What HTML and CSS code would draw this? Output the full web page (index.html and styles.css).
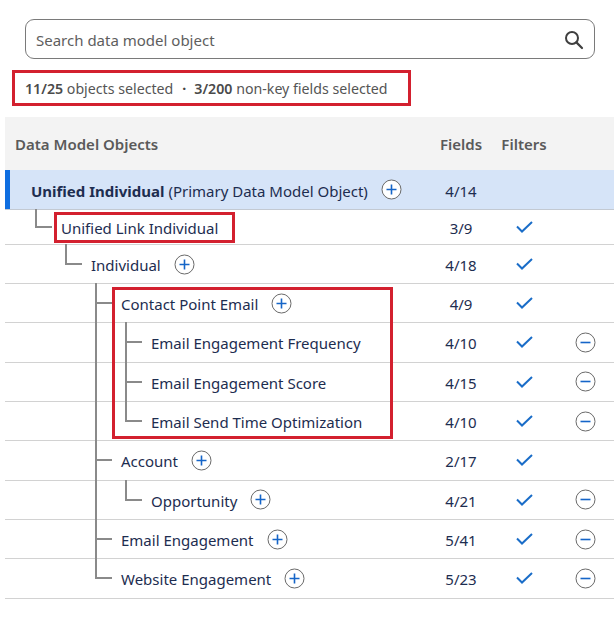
FILE: index.html
```html
<!DOCTYPE html>
<html lang="en">
<head>
<meta charset="utf-8">
<title>Data Model Objects</title>
<link rel="stylesheet" href="styles.css">
</head>
<body>
<div class="page">
  <div class="search">
    <span class="search-text">Search data model object</span>
    <svg class="search-icon" width="20" height="20" viewBox="0 0 20 20"><circle cx="8" cy="8" r="6" fill="none" stroke="#3f3f3f" stroke-width="2"/><path d="M12.4 12.4 L18 18" stroke="#3f3f3f" stroke-width="2.2" stroke-linecap="round"/></svg>
  </div>

  <div class="summary"><b>11/25</b><span> objects selected</span><span class="sep">·</span><b>3/200</b><span> non-key fields selected</span></div>

  <div class="table">
    <div class="row head">
      <div class="c-name">Data Model Objects</div>
      <div class="c-fields">Fields</div>
      <div class="c-filters">Filters</div>
      <div class="c-act"></div>
    </div>

    <div class="row primary">
      <div class="c-name"><span class="label"><b>Unified Individual</b> (Primary Data Model Object)</span><svg class="add" width="21" height="21" viewBox="0 0 21 21"><circle cx="10.5" cy="10.5" r="9.5" fill="#fff" stroke="#6a6a6a" stroke-width="1"/><path d="M5.5 10.5 H15.5 M10.5 5.5 V15.5" stroke="#1565c8" stroke-width="1.6"/></svg></div>
      <div class="c-fields">4/14</div>
      <div class="c-filters"></div>
      <div class="c-act"></div>
    </div>

    <div class="row short">
      <div class="c-name"><span class="g g-elbow"></span><span class="label">Unified Link Individual</span></div>
      <div class="c-fields">3/9</div>
      <div class="c-filters"><svg class="check" width="17" height="12" viewBox="0 0 17 12"><path d="M1 5.5 L6 10.5 L16 1" fill="none" stroke="#1a6dc8" stroke-width="2"/></svg></div>
      <div class="c-act"></div>
    </div>

    <div class="row">
      <div class="c-name"><span class="g"></span><span class="g g-elbow"></span><span class="label">Individual</span><svg class="add" width="21" height="21" viewBox="0 0 21 21"><circle cx="10.5" cy="10.5" r="9.5" fill="#fff" stroke="#6a6a6a" stroke-width="1"/><path d="M5.5 10.5 H15.5 M10.5 5.5 V15.5" stroke="#1565c8" stroke-width="1.6"/></svg></div>
      <div class="c-fields">4/18</div>
      <div class="c-filters"><svg class="check" width="17" height="12" viewBox="0 0 17 12"><path d="M1 5.5 L6 10.5 L16 1" fill="none" stroke="#1a6dc8" stroke-width="2"/></svg></div>
      <div class="c-act"></div>
    </div>

    <div class="row">
      <div class="c-name"><span class="g"></span><span class="g"></span><span class="g g-tee"></span><span class="label">Contact Point Email</span><svg class="add" width="21" height="21" viewBox="0 0 21 21"><circle cx="10.5" cy="10.5" r="9.5" fill="#fff" stroke="#6a6a6a" stroke-width="1"/><path d="M5.5 10.5 H15.5 M10.5 5.5 V15.5" stroke="#1565c8" stroke-width="1.6"/></svg></div>
      <div class="c-fields">4/9</div>
      <div class="c-filters"><svg class="check" width="17" height="12" viewBox="0 0 17 12"><path d="M1 5.5 L6 10.5 L16 1" fill="none" stroke="#1a6dc8" stroke-width="2"/></svg></div>
      <div class="c-act"></div>
    </div>

    <div class="row">
      <div class="c-name"><span class="g"></span><span class="g"></span><span class="g g-pipe"></span><span class="g g-tee"></span><span class="label">Email Engagement Frequency</span></div>
      <div class="c-fields">4/10</div>
      <div class="c-filters"><svg class="check" width="17" height="12" viewBox="0 0 17 12"><path d="M1 5.5 L6 10.5 L16 1" fill="none" stroke="#1a6dc8" stroke-width="2"/></svg></div>
      <div class="c-act"><svg class="remove" width="21" height="21" viewBox="0 0 21 21"><circle cx="10.5" cy="10.5" r="9.5" fill="#fff" stroke="#6a6a6a" stroke-width="1"/><path d="M5.5 10.5 H15.5" stroke="#1565c8" stroke-width="1.6"/></svg></div>
    </div>

    <div class="row">
      <div class="c-name"><span class="g"></span><span class="g"></span><span class="g g-pipe"></span><span class="g g-tee"></span><span class="label">Email Engagement Score</span></div>
      <div class="c-fields">4/15</div>
      <div class="c-filters"><svg class="check" width="17" height="12" viewBox="0 0 17 12"><path d="M1 5.5 L6 10.5 L16 1" fill="none" stroke="#1a6dc8" stroke-width="2"/></svg></div>
      <div class="c-act"><svg class="remove" width="21" height="21" viewBox="0 0 21 21"><circle cx="10.5" cy="10.5" r="9.5" fill="#fff" stroke="#6a6a6a" stroke-width="1"/><path d="M5.5 10.5 H15.5" stroke="#1565c8" stroke-width="1.6"/></svg></div>
    </div>

    <div class="row">
      <div class="c-name"><span class="g"></span><span class="g"></span><span class="g g-pipe"></span><span class="g g-elbow"></span><span class="label">Email Send Time Optimization</span></div>
      <div class="c-fields">4/10</div>
      <div class="c-filters"><svg class="check" width="17" height="12" viewBox="0 0 17 12"><path d="M1 5.5 L6 10.5 L16 1" fill="none" stroke="#1a6dc8" stroke-width="2"/></svg></div>
      <div class="c-act"><svg class="remove" width="21" height="21" viewBox="0 0 21 21"><circle cx="10.5" cy="10.5" r="9.5" fill="#fff" stroke="#6a6a6a" stroke-width="1"/><path d="M5.5 10.5 H15.5" stroke="#1565c8" stroke-width="1.6"/></svg></div>
    </div>

    <div class="row">
      <div class="c-name"><span class="g"></span><span class="g"></span><span class="g g-tee"></span><span class="label">Account</span><svg class="add" width="21" height="21" viewBox="0 0 21 21"><circle cx="10.5" cy="10.5" r="9.5" fill="#fff" stroke="#6a6a6a" stroke-width="1"/><path d="M5.5 10.5 H15.5 M10.5 5.5 V15.5" stroke="#1565c8" stroke-width="1.6"/></svg></div>
      <div class="c-fields">2/17</div>
      <div class="c-filters"><svg class="check" width="17" height="12" viewBox="0 0 17 12"><path d="M1 5.5 L6 10.5 L16 1" fill="none" stroke="#1a6dc8" stroke-width="2"/></svg></div>
      <div class="c-act"></div>
    </div>

    <div class="row">
      <div class="c-name"><span class="g"></span><span class="g"></span><span class="g g-pipe"></span><span class="g g-elbow"></span><span class="label">Opportunity</span><svg class="add" width="21" height="21" viewBox="0 0 21 21"><circle cx="10.5" cy="10.5" r="9.5" fill="#fff" stroke="#6a6a6a" stroke-width="1"/><path d="M5.5 10.5 H15.5 M10.5 5.5 V15.5" stroke="#1565c8" stroke-width="1.6"/></svg></div>
      <div class="c-fields">4/21</div>
      <div class="c-filters"><svg class="check" width="17" height="12" viewBox="0 0 17 12"><path d="M1 5.5 L6 10.5 L16 1" fill="none" stroke="#1a6dc8" stroke-width="2"/></svg></div>
      <div class="c-act"><svg class="remove" width="21" height="21" viewBox="0 0 21 21"><circle cx="10.5" cy="10.5" r="9.5" fill="#fff" stroke="#6a6a6a" stroke-width="1"/><path d="M5.5 10.5 H15.5" stroke="#1565c8" stroke-width="1.6"/></svg></div>
    </div>

    <div class="row">
      <div class="c-name"><span class="g"></span><span class="g"></span><span class="g g-tee"></span><span class="label">Email Engagement</span><svg class="add" width="21" height="21" viewBox="0 0 21 21"><circle cx="10.5" cy="10.5" r="9.5" fill="#fff" stroke="#6a6a6a" stroke-width="1"/><path d="M5.5 10.5 H15.5 M10.5 5.5 V15.5" stroke="#1565c8" stroke-width="1.6"/></svg></div>
      <div class="c-fields">5/41</div>
      <div class="c-filters"><svg class="check" width="17" height="12" viewBox="0 0 17 12"><path d="M1 5.5 L6 10.5 L16 1" fill="none" stroke="#1a6dc8" stroke-width="2"/></svg></div>
      <div class="c-act"><svg class="remove" width="21" height="21" viewBox="0 0 21 21"><circle cx="10.5" cy="10.5" r="9.5" fill="#fff" stroke="#6a6a6a" stroke-width="1"/><path d="M5.5 10.5 H15.5" stroke="#1565c8" stroke-width="1.6"/></svg></div>
    </div>

    <div class="row">
      <div class="c-name"><span class="g"></span><span class="g"></span><span class="g g-elbow"></span><span class="label">Website Engagement</span><svg class="add" width="21" height="21" viewBox="0 0 21 21"><circle cx="10.5" cy="10.5" r="9.5" fill="#fff" stroke="#6a6a6a" stroke-width="1"/><path d="M5.5 10.5 H15.5 M10.5 5.5 V15.5" stroke="#1565c8" stroke-width="1.6"/></svg></div>
      <div class="c-fields">5/23</div>
      <div class="c-filters"><svg class="check" width="17" height="12" viewBox="0 0 17 12"><path d="M1 5.5 L6 10.5 L16 1" fill="none" stroke="#1a6dc8" stroke-width="2"/></svg></div>
      <div class="c-act"><svg class="remove" width="21" height="21" viewBox="0 0 21 21"><circle cx="10.5" cy="10.5" r="9.5" fill="#fff" stroke="#6a6a6a" stroke-width="1"/><path d="M5.5 10.5 H15.5" stroke="#1565c8" stroke-width="1.6"/></svg></div>
    </div>

    <div class="annot annot-link"></div>
    <div class="annot annot-email"></div>
  </div>
</div>
</body>
</html>
```

FILE: styles.css
```css
* { box-sizing: border-box; }

html, body {
  margin: 0;
  padding: 0;
  background: #ffffff;
}

body {
  font-family: "Noto Sans", "Open Sans", sans-serif;
  font-size: 15px;
  color: #1d2d50;
}

.page {
  width: 614px;
  padding-top: 19px;
}

.search {
  margin-left: 25px;
  width: 570px;
  height: 40px;
  border: 1px solid #7a7a7a;
  border-radius: 9px;
  display: flex;
  align-items: center;
  justify-content: space-between;
  padding: 1px 10px 0 10px;
}

.search-text {
  color: #5e5e5e;
  font-size: 15px;
}

.search-icon {
  display: block;
}

.summary {
  margin-top: 11px;
  margin-left: 12px;
  width: 399px;
  height: 36px;
  border: 3px solid #d3202f;
  padding: 1px 0 0 10px;
  display: flex;
  align-items: center;
  white-space: pre;
  font-size: 14.2px;
  color: #555555;
}

.summary b {
  font-weight: 600;
  color: #4a4a4a;
}

.summary .sep {
  font-weight: 700;
  color: #444444;
  margin: 0 8px 0 9px;
}

.table {
  position: relative;
  margin-top: 11px;
  margin-left: 5px;
  width: 609px;
}

.row {
  display: grid;
  grid-template-columns: 1fr 62px 64px 58px;
  align-items: center;
  height: 39.33px;
  border-bottom: 1px solid #d2d2d2;
}

.row.head {
  height: 53px;
  background: #f3f3f3;
  border-bottom: none;
  color: #5a5a5a;
  font-weight: 600;
}

.row.head .c-name {
  padding-left: 10px;
}

.row.primary {
  height: 40px;
  background: #d6e4f8;
  box-shadow: inset 5px 0 0 #0f6ee0;
  border-bottom-color: #c3c9d2;
}

.row.primary b {
  font-weight: 700;
}

.row.short {
  height: 35px;
}

.row.primary + .row.short + .row {
  height: 39px;
}

.c-name {
  align-self: stretch;
  display: flex;
  align-items: center;
  padding-left: 26px;
  white-space: nowrap;
}

.row.head .c-name {
  align-self: center;
}

.label {
  padding-top: 2px;
}

.c-fields {
  text-align: center;
  padding-top: 2px;
}

.row.head .c-fields,
.row.head .c-filters {
  padding-top: 0;
}

.c-filters,
.c-act {
  display: flex;
  justify-content: center;
  align-items: center;
}

.add {
  display: block;
  margin-left: 13px;
  flex: none;
}

.remove,
.check {
  display: block;
}

.g {
  position: relative;
  align-self: stretch;
  width: 30px;
  flex: none;
}

.g-pipe::before,
.g-tee::before,
.g-elbow::before {
  content: "";
  position: absolute;
  left: 4px;
  width: 2px;
  background: #8a8a8a;
}

.g-pipe::before,
.g-tee::before {
  top: -1px;
  bottom: -1px;
}

.g-elbow::before {
  top: -1px;
  height: calc(50% + 1px);
}

.g-tee::after,
.g-elbow::after {
  content: "";
  position: absolute;
  left: 4px;
  top: calc(50% - 1px);
  width: 17px;
  height: 2px;
  background: #8a8a8a;
}

.annot {
  position: absolute;
  border: 3px solid #d3202f;
  pointer-events: none;
}

.annot-link {
  left: 49px;
  top: 95px;
  width: 181px;
  height: 31px;
}

.annot-email {
  left: 107px;
  top: 170px;
  width: 281px;
  height: 152px;
}
```
